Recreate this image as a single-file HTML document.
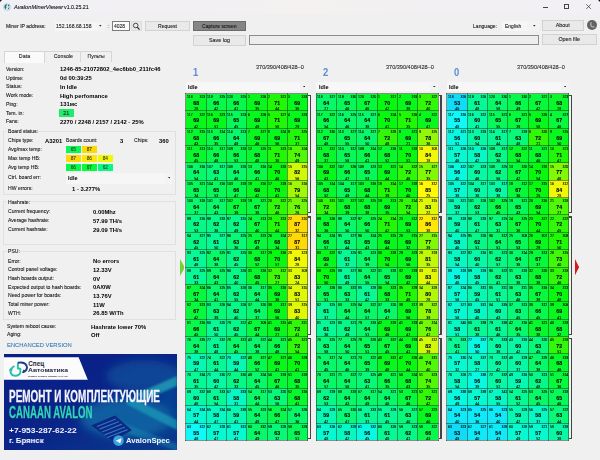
<!DOCTYPE html>
<html><head><meta charset="utf-8"><style>*{box-sizing:border-box;margin:0;padding:0}
html,body{width:600px;height:460px;overflow:hidden;background:#f0f0f0;font-family:"Liberation Sans",sans-serif;color:#000;position:relative}
.a{position:absolute}
.t{position:absolute;white-space:nowrap;line-height:1}
.c{position:absolute;width:20.33px;height:17.35px;overflow:hidden;color:#000}
.c i,.c s,.c u,.c b{position:absolute;font-style:normal;text-decoration:none;line-height:1;white-space:nowrap}
.c i{left:1.0px;top:1.75px;font-size:4.4px;-webkit-text-stroke:0.1px #000;transform:scaleX(0.8);transform-origin:0 0}
.c s{right:0.9px;top:1.75px;font-size:4.4px;-webkit-text-stroke:0.1px #000;transform:scaleX(0.8);transform-origin:100% 0}
.c b{left:0;width:100%;text-align:center;top:6.5px;font-size:6.0px;font-weight:bold;-webkit-text-stroke:0.12px #000;transform:scaleX(0.86)}
.c u{left:0;width:100%;text-align:center;top:13.85px;font-size:4.4px;-webkit-text-stroke:0.1px #000;transform:scaleX(0.82)}
.br{position:absolute;width:1.5px;background:#444}
.br:before,.br:after{content:"";position:absolute;right:0;width:3px;height:1.1px;background:#444}
.br:before{top:0}.br:after{bottom:0}</style></head><body>
<div class="a" style="left:0.00px;top:0.00px;width:600.00px;height:14.20px;background:linear-gradient(90deg,#f1f0f4 0%,#f2f0f3 35%,#f4f1f0 50%,#f3f0f2 65%,#f2f0f5 100%)"></div>
<svg class="a" style="left:2.5px;top:3px" width="8" height="8" viewBox="0 0 8 8"><circle cx="4" cy="4" r="3.5" fill="#d8eef0"/><path d="M1.3 3.2 Q2 1.2 3.6 1 L4 2.2 L3 3.4 L3.6 4.6 L2.6 6.2 Q1.2 5.4 1.3 3.2Z M5 1.2 Q6.4 1.6 6.8 3 L5.6 3.4 L4.8 2.4Z M5.2 4.8 L6.6 4.6 Q6.2 6.2 4.8 6.8Z" fill="#3d6e7e"/><circle cx="4" cy="4" r="3.5" fill="none" stroke="#8ec4cc" stroke-width="0.5"/></svg>
<div class="t" style="left:13.80px;top:5.17px;font-size:5.7px;color:#111;transform:scaleX(1.01);transform-origin:0 0;font-style:italic;-webkit-text-stroke:0.1px #111">AvalonMinerViewer</div>
<div class="t" style="left:64.20px;top:5.17px;font-size:5.7px;color:#111;transform:scaleX(0.93);transform-origin:0 0;-webkit-text-stroke:0.1px #111">v1.0.25.21</div>
<div class="a" style="left:-2px;top:-2px;width:4px;height:4px;border-radius:50%;background:radial-gradient(circle,#111 0,#111 40%,rgba(0,0,0,0) 75%)"></div>
<div class="a" style="left:598px;top:-2px;width:4px;height:4px;border-radius:50%;background:radial-gradient(circle,#111 0,#111 40%,rgba(0,0,0,0) 75%)"></div>
<div class="a" style="left:542.60px;top:6.60px;width:5.10px;height:0.80px;background:#444"></div>
<div class="a" style="left:564.20px;top:4.40px;width:4.80px;height:4.80px;border:0.8px solid #444"></div>
<svg class="a" style="left:586.2px;top:4.3px" width="5.2" height="5.2" viewBox="0 0 5.2 5.2"><path d="M0.3 0.3 L4.9 4.9 M4.9 0.3 L0.3 4.9" stroke="#444" stroke-width="0.8"/></svg>
<div class="t" style="left:6.00px;top:23.84px;font-size:5.5px;color:#1a1a1a;transform:scaleX(0.925);transform-origin:0 0;-webkit-text-stroke:0.12px #222">Miner IP address:</div>
<div class="a" style="left:54.50px;top:21.50px;width:50.00px;height:9.50px;background:#f6f6f6"></div>
<div class="a" style="left:96.50px;top:21.50px;width:8.00px;height:9.50px;background:#f3f3f3"></div>
<div class="t" style="left:56.00px;top:23.84px;font-size:5.5px;color:#1a1a1a;transform:scaleX(0.93);transform-origin:0 0;-webkit-text-stroke:0.1px #1a1a1a">152.168.68.158</div>
<svg class="a" style="left:99.20px;top:25.40px" width="2.6" height="1.6" viewBox="0 0 2.6 1.6"><path d="M0 0 L2.6 0 L1.3 1.5Z" fill="#222"/></svg>
<div class="t" style="left:107.60px;top:23.84px;font-size:5.5px;color:#333;-webkit-text-stroke:0.1px #333">:</div>
<div class="a" style="left:112.00px;top:21.30px;width:17.80px;height:9.60px;background:#fdfdfd;border:0.9px solid #7c7c7c"></div>
<div class="t" style="left:114.00px;top:23.84px;font-size:5.5px;color:#1a1a1a;transform:scaleX(0.9);transform-origin:0 0;-webkit-text-stroke:0.1px #1a1a1a">4028</div>
<div class="a" style="left:131.30px;top:21.00px;width:11.00px;height:10.30px;background:#e9e9e9;border:0.8px solid #dcdcdc"></div>
<svg class="a" style="left:132.3px;top:21.8px" width="9" height="9" viewBox="0 0 9 9"><circle cx="3.7" cy="3.5" r="2.3" stroke="#3a3a3a" stroke-width="0.9" fill="none"/><path d="M5.3 5.2 L7.6 7.6" stroke="#3a3a3a" stroke-width="1.3"/></svg>
<div class="a" style="left:144.50px;top:20.80px;width:45.00px;height:10.40px;background:#e9e9e9;border:0.8px solid #d2d2d2"></div>
<div class="t" style="left:144.50px;top:23.84px;font-size:5.5px;color:#1a1a1a;width:45.00px;text-align:center;transform:scaleX(0.93);transform-origin:50% 0;-webkit-text-stroke:0.1px #1a1a1a">Request</div>
<div class="a" style="left:193.00px;top:21.20px;width:52.70px;height:9.80px;background:#858585;border:0.9px solid #6c6c6c"></div>
<div class="t" style="left:193.00px;top:23.84px;font-size:5.5px;color:#161616;width:52.70px;text-align:center;transform:scaleX(0.92);transform-origin:50% 0;-webkit-text-stroke:0.1px #161616">Capture screen</div>
<div class="t" style="left:473.00px;top:23.84px;font-size:5.5px;color:#1a1a1a;transform:scaleX(0.925);transform-origin:0 0;-webkit-text-stroke:0.12px #222">Language:</div>
<div class="a" style="left:502.30px;top:21.00px;width:36.70px;height:10.00px;background:#f6f6f6"></div>
<div class="a" style="left:527.00px;top:21.00px;width:12.00px;height:10.00px;background:#f3f3f3"></div>
<div class="t" style="left:504.70px;top:23.84px;font-size:5.5px;color:#1a1a1a;transform:scaleX(0.9);transform-origin:0 0;-webkit-text-stroke:0.1px #1a1a1a">English</div>
<svg class="a" style="left:533.30px;top:25.40px" width="2.6" height="1.6" viewBox="0 0 2.6 1.6"><path d="M0 0 L2.6 0 L1.3 1.5Z" fill="#222"/></svg>
<div class="a" style="left:542.30px;top:19.70px;width:41.60px;height:11.60px;background:#e9e9e9;border:0.8px solid #d2d2d2"></div>
<div class="t" style="left:542.30px;top:23.37px;font-size:5.7px;color:#1a1a1a;width:41.60px;text-align:center;transform:scaleX(0.95);transform-origin:50% 0;-webkit-text-stroke:0.1px #1a1a1a">About</div>
<div class="a" style="left:587px;top:20px;width:10px;height:10px;border-radius:50%;background:#626262"></div>
<svg class="a" style="left:587px;top:20px" width="10" height="10" viewBox="0 0 10 10"><path d="M3.9 2.6 Q3.6 4.6 4.2 6 Q5 7.2 7 6.9" stroke="#b4b4b4" stroke-width="1.3" fill="none" stroke-linecap="round"/></svg>
<div class="a" style="left:193.00px;top:34.50px;width:52.80px;height:11.00px;background:#e9e9e9;border:0.8px solid #d2d2d2"></div>
<div class="t" style="left:193.00px;top:37.67px;font-size:5.7px;color:#1a1a1a;width:52.80px;text-align:center;transform:scaleX(0.95);transform-origin:50% 0;-webkit-text-stroke:0.1px #1a1a1a">Save log</div>
<div class="a" style="left:249.00px;top:34.80px;width:290.10px;height:9.80px;background:#ededed;border:0.9px solid #8c8c8c"></div>
<div class="a" style="left:542.30px;top:34.00px;width:54.40px;height:11.30px;background:#e9e9e9;border:0.8px solid #d2d2d2"></div>
<div class="t" style="left:542.30px;top:37.37px;font-size:5.7px;color:#1a1a1a;width:54.40px;text-align:center;transform:scaleX(0.95);transform-origin:50% 0;-webkit-text-stroke:0.1px #1a1a1a">Open file</div>
<div class="a" style="left:3.50px;top:50.50px;width:41.00px;height:12.00px;background:#fafafa;border:0.8px solid #d6d6d6;border-bottom:none"></div>
<div class="t" style="left:3.50px;top:54.16px;font-size:5.6px;color:#1a1a1a;width:41.00px;text-align:center;transform:scaleX(0.95);transform-origin:50% 0;-webkit-text-stroke:0.1px #1a1a1a">Data</div>
<div class="a" style="left:44.50px;top:50.80px;width:36.80px;height:11.70px;background:#f0f0f0;border:0.8px solid #d6d6d6;border-left:none;border-bottom:none"></div>
<div class="t" style="left:44.50px;top:54.16px;font-size:5.6px;color:#1a1a1a;width:36.80px;text-align:center;transform:scaleX(0.93);transform-origin:50% 0;-webkit-text-stroke:0.1px #1a1a1a">Console</div>
<div class="a" style="left:81.30px;top:50.80px;width:30.40px;height:11.70px;background:#f0f0f0;border:0.8px solid #d6d6d6;border-left:none;border-bottom:none"></div>
<div class="t" style="left:81.30px;top:54.16px;font-size:5.6px;color:#1a1a1a;width:30.40px;text-align:center;transform:scaleX(0.9);transform-origin:50% 0;-webkit-text-stroke:0.1px #1a1a1a">Пульты</div>
<div class="t" style="left:6.00px;top:66.84px;font-size:5.5px;color:#1a1a1a;transform:scaleX(0.925);transform-origin:0 0;-webkit-text-stroke:0.12px #222">Version:</div>
<div class="t" style="left:59.80px;top:66.34px;font-size:6.1px;font-weight:bold;transform:scaleX(0.96);transform-origin:0 0">1246-85-21072802_4ec6bb0_211fc46</div>
<div class="t" style="left:6.00px;top:75.84px;font-size:5.5px;color:#1a1a1a;transform:scaleX(0.925);transform-origin:0 0;-webkit-text-stroke:0.12px #222">Uptime:</div>
<div class="t" style="left:59.80px;top:75.34px;font-size:6.1px;font-weight:bold;transform:scaleX(0.96);transform-origin:0 0">0d 00:39:25</div>
<div class="t" style="left:6.00px;top:84.34px;font-size:5.5px;color:#1a1a1a;transform:scaleX(0.925);transform-origin:0 0;-webkit-text-stroke:0.12px #222">Status:</div>
<div class="t" style="left:59.80px;top:83.84px;font-size:6.1px;font-weight:bold;transform:scaleX(0.96);transform-origin:0 0">In Idle</div>
<div class="t" style="left:6.00px;top:93.14px;font-size:5.5px;color:#1a1a1a;transform:scaleX(0.925);transform-origin:0 0;-webkit-text-stroke:0.12px #222">Work mode:</div>
<div class="t" style="left:59.80px;top:92.64px;font-size:6.1px;font-weight:bold;transform:scaleX(0.96);transform-origin:0 0">High perfomance</div>
<div class="t" style="left:6.00px;top:101.84px;font-size:5.5px;color:#1a1a1a;transform:scaleX(0.925);transform-origin:0 0;-webkit-text-stroke:0.12px #222">Ping:</div>
<div class="t" style="left:59.80px;top:101.34px;font-size:6.1px;font-weight:bold;transform:scaleX(0.96);transform-origin:0 0">131мс</div>
<div class="t" style="left:6.00px;top:110.54px;font-size:5.5px;color:#1a1a1a;transform:scaleX(0.925);transform-origin:0 0;-webkit-text-stroke:0.12px #222">Tem. in:</div>
<div class="t" style="left:6.00px;top:119.24px;font-size:5.5px;color:#1a1a1a;transform:scaleX(0.925);transform-origin:0 0;-webkit-text-stroke:0.12px #222">Fans:</div>
<div class="t" style="left:59.80px;top:118.74px;font-size:6.1px;font-weight:bold;transform:scaleX(0.96);transform-origin:0 0">2270 / 2248 / 2157 / 2142 - 25%</div>
<div class="a" style="left:58.60px;top:109.20px;width:15.50px;height:7.40px;background:#22ea6c"></div>
<div class="t" style="left:58.60px;top:110.93px;font-size:5.4px;color:#202a20;width:15.50px;text-align:center;-webkit-text-stroke:0.1px #202a20">21</div>
<div class="a" style="left:3.40px;top:131.20px;width:172.20px;height:64.00px;border:0.8px solid #e0e0e0"></div>
<div class="a" style="left:6.40px;top:129.20px;width:30.50px;height:4.00px;background:#f0f0f0"></div>
<div class="t" style="left:7.60px;top:129.34px;font-size:5.5px;color:#1a1a1a;transform:scaleX(0.925);transform-origin:0 0;-webkit-text-stroke:0.12px #222">Board status:</div>
<div class="t" style="left:7.80px;top:138.34px;font-size:5.5px;color:#1a1a1a;transform:scaleX(0.925);transform-origin:0 0;-webkit-text-stroke:0.12px #222">Chips type:</div>
<div class="t" style="left:44.50px;top:137.64px;font-size:6.1px;font-weight:bold;transform:scaleX(0.96);transform-origin:0 0">A3201</div>
<div class="t" style="left:66.00px;top:138.34px;font-size:5.5px;color:#1a1a1a;transform:scaleX(0.925);transform-origin:0 0;-webkit-text-stroke:0.12px #222">Boards count:</div>
<div class="t" style="left:120.20px;top:137.64px;font-size:6.1px;font-weight:bold;transform:scaleX(0.96);transform-origin:0 0">3</div>
<div class="t" style="left:134.00px;top:138.34px;font-size:5.5px;color:#1a1a1a;transform:scaleX(0.925);transform-origin:0 0;-webkit-text-stroke:0.12px #222">Chips:</div>
<div class="t" style="left:158.70px;top:137.64px;font-size:6.1px;font-weight:bold;transform:scaleX(0.96);transform-origin:0 0">360</div>
<div class="t" style="left:7.80px;top:147.14px;font-size:5.5px;color:#1a1a1a;transform:scaleX(0.925);transform-origin:0 0;-webkit-text-stroke:0.12px #222">Avg/max temp:</div>
<div class="t" style="left:7.80px;top:155.94px;font-size:5.5px;color:#1a1a1a;transform:scaleX(0.925);transform-origin:0 0;-webkit-text-stroke:0.12px #222">Max temp HB:</div>
<div class="t" style="left:7.80px;top:165.04px;font-size:5.5px;color:#1a1a1a;transform:scaleX(0.925);transform-origin:0 0;-webkit-text-stroke:0.12px #222">Avg temp HB:</div>
<div class="t" style="left:7.80px;top:175.44px;font-size:5.5px;color:#1a1a1a;transform:scaleX(0.925);transform-origin:0 0;-webkit-text-stroke:0.12px #222">Ctrl. board err:</div>
<div class="t" style="left:7.80px;top:186.04px;font-size:5.5px;color:#1a1a1a;transform:scaleX(0.925);transform-origin:0 0;-webkit-text-stroke:0.12px #222">HW errors:</div>
<div class="a" style="left:66.00px;top:145.80px;width:14.70px;height:7.40px;background:#08f85a"></div>
<div class="t" style="left:66.00px;top:147.10px;font-size:5.2px;color:#3b3a1c;width:14.70px;text-align:center;transform:scaleX(0.92);transform-origin:50% 0;-webkit-text-stroke:0.1px #3b3a1c">65</div>
<div class="a" style="left:82.00px;top:145.80px;width:14.70px;height:7.40px;background:#ffd808"></div>
<div class="t" style="left:82.00px;top:147.10px;font-size:5.2px;color:#3b3a1c;width:14.70px;text-align:center;transform:scaleX(0.92);transform-origin:50% 0;-webkit-text-stroke:0.1px #3b3a1c">87</div>
<div class="a" style="left:66.00px;top:154.50px;width:14.70px;height:7.30px;background:#ffd808"></div>
<div class="t" style="left:66.00px;top:155.70px;font-size:5.2px;color:#3b3a1c;width:14.70px;text-align:center;transform:scaleX(0.92);transform-origin:50% 0;-webkit-text-stroke:0.1px #3b3a1c">87</div>
<div class="a" style="left:82.00px;top:154.50px;width:14.70px;height:7.30px;background:#ffe808"></div>
<div class="t" style="left:82.00px;top:155.70px;font-size:5.2px;color:#3b3a1c;width:14.70px;text-align:center;transform:scaleX(0.92);transform-origin:50% 0;-webkit-text-stroke:0.1px #3b3a1c">86</div>
<div class="a" style="left:98.00px;top:154.50px;width:14.70px;height:7.30px;background:#f0f808"></div>
<div class="t" style="left:98.00px;top:155.70px;font-size:5.2px;color:#3b3a1c;width:14.70px;text-align:center;transform:scaleX(0.92);transform-origin:50% 0;-webkit-text-stroke:0.1px #3b3a1c">84</div>
<div class="a" style="left:66.00px;top:163.80px;width:14.70px;height:7.40px;background:#08f84b"></div>
<div class="t" style="left:66.00px;top:165.10px;font-size:5.2px;color:#3b3a1c;width:14.70px;text-align:center;transform:scaleX(0.92);transform-origin:50% 0;-webkit-text-stroke:0.1px #3b3a1c">66</div>
<div class="a" style="left:82.00px;top:163.80px;width:14.70px;height:7.40px;background:#08f83c"></div>
<div class="t" style="left:82.00px;top:165.10px;font-size:5.2px;color:#3b3a1c;width:14.70px;text-align:center;transform:scaleX(0.92);transform-origin:50% 0;-webkit-text-stroke:0.1px #3b3a1c">67</div>
<div class="a" style="left:98.00px;top:163.80px;width:14.70px;height:7.40px;background:#08f887"></div>
<div class="t" style="left:98.00px;top:165.10px;font-size:5.2px;color:#3b3a1c;width:14.70px;text-align:center;transform:scaleX(0.92);transform-origin:50% 0;-webkit-text-stroke:0.1px #3b3a1c">62</div>
<div class="a" style="left:66.00px;top:173.30px;width:106.70px;height:10.30px;background:#f6f6f6"></div>
<div class="a" style="left:164.70px;top:173.30px;width:8.00px;height:10.30px;background:#f3f3f3"></div>
<div class="t" style="left:68.00px;top:176.19px;font-size:5.8px;font-weight:bold;transform:scaleX(0.95);transform-origin:0 0">Idle</div>
<svg class="a" style="left:167.70px;top:177.20px" width="2.6" height="1.6" viewBox="0 0 2.6 1.6"><path d="M0 0 L2.6 0 L1.3 1.5Z" fill="#222"/></svg>
<div class="t" style="left:72.30px;top:186.04px;font-size:6.1px;font-weight:bold;transform:scaleX(0.96);transform-origin:0 0">1 - 3.277%</div>
<div class="a" style="left:3.40px;top:201.20px;width:172.20px;height:43.80px;border:0.8px solid #e0e0e0"></div>
<div class="a" style="left:6.40px;top:199.20px;width:19.50px;height:4.00px;background:#f0f0f0"></div>
<div class="t" style="left:7.60px;top:199.84px;font-size:5.5px;color:#1a1a1a;transform:scaleX(0.925);transform-origin:0 0;-webkit-text-stroke:0.12px #222">Hashrate:</div>
<div class="t" style="left:7.60px;top:209.44px;font-size:5.5px;color:#1a1a1a;transform:scaleX(0.925);transform-origin:0 0;-webkit-text-stroke:0.12px #222">Current frequency:</div>
<div class="t" style="left:92.70px;top:209.34px;font-size:6.1px;font-weight:bold;transform:scaleX(0.96);transform-origin:0 0">0.00Mhz</div>
<div class="t" style="left:7.60px;top:218.04px;font-size:5.5px;color:#1a1a1a;transform:scaleX(0.925);transform-origin:0 0;-webkit-text-stroke:0.12px #222">Average hashrate:</div>
<div class="t" style="left:92.70px;top:218.04px;font-size:6.1px;font-weight:bold;transform:scaleX(0.96);transform-origin:0 0">57.99 TH/s</div>
<div class="t" style="left:7.60px;top:226.64px;font-size:5.5px;color:#1a1a1a;transform:scaleX(0.925);transform-origin:0 0;-webkit-text-stroke:0.12px #222">Current hashrate:</div>
<div class="t" style="left:92.70px;top:226.64px;font-size:6.1px;font-weight:bold;transform:scaleX(0.96);transform-origin:0 0">29.09 TH/s</div>
<div class="a" style="left:3.40px;top:251.20px;width:172.20px;height:69.10px;border:0.8px solid #e0e0e0"></div>
<div class="a" style="left:6.60px;top:249.20px;width:12.00px;height:4.00px;background:#f0f0f0"></div>
<div class="t" style="left:7.80px;top:249.24px;font-size:5.5px;color:#1a1a1a;transform:scaleX(0.925);transform-origin:0 0;-webkit-text-stroke:0.12px #222">PSU:</div>
<div class="t" style="left:7.60px;top:258.74px;font-size:5.5px;color:#1a1a1a;transform:scaleX(0.925);transform-origin:0 0;-webkit-text-stroke:0.12px #222">Error:</div>
<div class="t" style="left:92.70px;top:258.34px;font-size:6.1px;font-weight:bold;transform:scaleX(0.96);transform-origin:0 0">No errors</div>
<div class="t" style="left:7.60px;top:267.34px;font-size:5.5px;color:#1a1a1a;transform:scaleX(0.925);transform-origin:0 0;-webkit-text-stroke:0.12px #222">Control panel voltage:</div>
<div class="t" style="left:92.70px;top:266.94px;font-size:6.1px;font-weight:bold;transform:scaleX(0.96);transform-origin:0 0">12.33V</div>
<div class="t" style="left:7.60px;top:275.94px;font-size:5.5px;color:#1a1a1a;transform:scaleX(0.925);transform-origin:0 0;-webkit-text-stroke:0.12px #222">Hash boards output:</div>
<div class="t" style="left:92.70px;top:275.54px;font-size:6.1px;font-weight:bold;transform:scaleX(0.96);transform-origin:0 0">0V</div>
<div class="t" style="left:7.60px;top:284.64px;font-size:5.5px;color:#1a1a1a;transform:scaleX(0.925);transform-origin:0 0;-webkit-text-stroke:0.12px #222">Expected output to hash boards:</div>
<div class="t" style="left:92.70px;top:284.24px;font-size:6.1px;font-weight:bold;transform:scaleX(0.96);transform-origin:0 0">0A/0W</div>
<div class="t" style="left:7.60px;top:293.24px;font-size:5.5px;color:#1a1a1a;transform:scaleX(0.925);transform-origin:0 0;-webkit-text-stroke:0.12px #222">Need power for boards:</div>
<div class="t" style="left:92.70px;top:292.84px;font-size:6.1px;font-weight:bold;transform:scaleX(0.96);transform-origin:0 0">13.76V</div>
<div class="t" style="left:7.60px;top:301.94px;font-size:5.5px;color:#1a1a1a;transform:scaleX(0.925);transform-origin:0 0;-webkit-text-stroke:0.12px #222">Total miner power:</div>
<div class="t" style="left:92.70px;top:301.54px;font-size:6.1px;font-weight:bold;transform:scaleX(0.96);transform-origin:0 0">11W</div>
<div class="t" style="left:7.60px;top:310.74px;font-size:5.5px;color:#1a1a1a;transform:scaleX(0.925);transform-origin:0 0;-webkit-text-stroke:0.12px #222">WTH:</div>
<div class="t" style="left:92.70px;top:310.34px;font-size:6.1px;font-weight:bold;transform:scaleX(0.96);transform-origin:0 0">26.85 W/Th</div>
<div class="t" style="left:6.80px;top:324.04px;font-size:5.5px;color:#1a1a1a;transform:scaleX(0.925);transform-origin:0 0;-webkit-text-stroke:0.12px #222">System reboot cause:</div>
<div class="t" style="left:91.00px;top:323.64px;font-size:6.1px;font-weight:bold;transform:scaleX(0.96);transform-origin:0 0">Hashrate lower 70%</div>
<div class="t" style="left:6.80px;top:332.34px;font-size:5.5px;color:#1a1a1a;transform:scaleX(0.925);transform-origin:0 0;-webkit-text-stroke:0.12px #222">Aging:</div>
<div class="t" style="left:91.00px;top:332.04px;font-size:6.1px;font-weight:bold;transform:scaleX(0.96);transform-origin:0 0">Off</div>
<div class="t" style="left:6.70px;top:342.51px;font-size:5.9px;color:#3b7db3;transform:scaleX(0.99);transform-origin:0 0;-webkit-text-stroke:0.1px #3b7db3">ENCHANCED VERSION</div>
<svg class="a" style="left:3.75px;top:353.6px" width="173" height="96.4" viewBox="0 0 173 96.4">
<defs>
<filter id="bl" x="-50%" y="-50%" width="200%" height="200%"><feGaussianBlur stdDeviation="4"/></filter>
<filter id="bl2" x="-50%" y="-50%" width="200%" height="200%"><feGaussianBlur stdDeviation="1.2"/></filter>
<linearGradient id="lg" x1="0" y1="0" x2="1" y2="1"><stop offset="0" stop-color="#0a1e86"/><stop offset="0.5" stop-color="#0a2488"/><stop offset="1" stop-color="#0a3c8c"/></linearGradient>
</defs>
<rect x="0" y="0" width="173" height="96.4" fill="url(#lg)"/>
<g filter="url(#bl)">
<ellipse cx="140" cy="22" rx="38" ry="16" fill="#0a4a98" opacity="0.85"/>
<ellipse cx="122" cy="64" rx="46" ry="20" fill="#0a6aa6" opacity="0.8"/>
<ellipse cx="165" cy="52" rx="10" ry="26" fill="#0e5aa0" opacity="0.4"/>
</g>
<g filter="url(#bl2)">
<path d="M132 40 L173 22 L173 32 L140 46Z" fill="#1fa6b8" opacity="0.75"/>
<path d="M128 44 L173 66 L173 76 L122 50Z" fill="#1a9cb8" opacity="0.7"/>
<path d="M112 66 L173 90 L173 97 L104 72Z" fill="#1590b4" opacity="0.4"/>
</g>
<polygon points="87.1,71.4 111.1,61.6 128,76.2 108.7,86.7" fill="#0a2482" opacity="0.92"/>
<g stroke="#3d86c8" stroke-width="1.3" opacity="0.8">
<path d="M93 72.5 L112 65 M95.5 75.2 L115 67.5 M98 78 L118 70.2 M100.5 80.8 L121 73 M103 83.5 L123.5 75.6"/>
</g>
<polygon points="0,3.2 74.6,3.2 83.8,25.8 0,25.8" fill="#fbfbfb"/>
<path d="M10.3 11.9 L6.2 15.6 Q6.4 21.6 11 21.8 Q15.9 21.9 16.3 18.2 L16.3 14.6 L13.9 14.6 L13.9 8.6" stroke="#2cbfa6" stroke-width="1.9" fill="none" stroke-linejoin="round"/>
<path d="M5 16.2 L8.6 13.4 L8.2 17.6Z" fill="#2cbfa6"/>
<path d="M13.9 8.6 L17.3 8.5 Q22.6 8.9 23 13.4 Q22.9 16.8 18.8 18.4" stroke="#1d3c88" stroke-width="1.9" fill="none"/>
<path d="M17.6 19.6 L21.4 16.4 L19.6 15.4Z" fill="#1d3c88"/>
<circle cx="114.5" cy="86.6" r="5.3" fill="#3aa3e3"/>
<path d="M111.6 86.7 L117.6 84.3 L116.2 89.4 L114.3 87.9 Z" fill="#fff"/>
</svg>
<div class="t" style="left:28.20px;top:361.08px;font-size:6.4px;font-weight:bold;color:#1b1f3d">Спец</div>
<div class="t" style="left:28.20px;top:367.79px;font-size:5.8px;font-weight:bold;color:#1b1f3d;transform:scaleX(1.18);transform-origin:0 0">Автоматика</div>
<div class="t" style="left:28.20px;top:375.44px;font-size:2.2px;font-weight:bold;color:#2a2a3a;transform:scaleX(1.15);transform-origin:0 0">Ремонт Сервис Canaan AVALON</div>
<div class="t" style="left:9.00px;top:388.19px;font-size:16.2px;font-weight:bold;color:#f4f4ff;transform:scaleX(0.615);transform-origin:0 0;-webkit-text-stroke:0.3px #f4f4ff">РЕМОНТ И КОМПЛЕКТУЮЩИЕ</div>
<div class="t" style="left:9.00px;top:405.09px;font-size:15.6px;font-weight:bold;color:#31d6b2;transform:scaleX(0.62);transform-origin:0 0;-webkit-text-stroke:0.3px #31d6b2">CANAAN AVALON</div>
<div class="t" style="left:9.00px;top:427.30px;font-size:7.8px;font-weight:bold;color:#f4f4ff;transform:scaleX(1.08);transform-origin:0 0">+7-953-287-62-22</div>
<div class="t" style="left:9.00px;top:436.70px;font-size:7.8px;font-weight:bold;color:#f4f4ff">г. Брянск</div>
<div class="t" style="left:126.30px;top:437.40px;font-size:7.8px;font-weight:bold;color:#f4f4ff;transform:scaleX(0.99);transform-origin:0 0">AvalonSpec</div>
<div class="t" style="left:192.50px;top:68.27px;font-size:10.2px;color:#5d8bd6;transform:scaleX(0.92);transform-origin:0 0;font-weight:600">1</div>
<div class="t" style="left:255.70px;top:64.56px;font-size:5.6px;color:#2a2a2a;transform:scaleX(0.99);transform-origin:0 0;-webkit-text-stroke:0.1px #2a2a2a">370/390/408/428–0</div>
<div class="a" style="left:185.80px;top:81.50px;width:122.00px;height:9.50px;background:#f7f7f7"></div>
<div class="a" style="left:299.80px;top:81.50px;width:8.00px;height:9.50px;background:#f3f3f3"></div>
<div class="t" style="left:188.00px;top:84.59px;font-size:5.8px;font-weight:bold;transform:scaleX(0.95);transform-origin:0 0">Idle</div>
<svg class="a" style="left:302.50px;top:85.70px" width="2.6" height="1.6" viewBox="0 0 2.6 1.6"><path d="M0 0 L2.6 0 L1.3 1.5Z" fill="#222"/></svg>
<div class="t" style="left:323.00px;top:68.27px;font-size:10.2px;color:#5d8bd6;transform:scaleX(0.92);transform-origin:0 0;font-weight:600">2</div>
<div class="t" style="left:386.20px;top:64.56px;font-size:5.6px;color:#2a2a2a;transform:scaleX(0.99);transform-origin:0 0;-webkit-text-stroke:0.1px #2a2a2a">370/390/408/428–0</div>
<div class="a" style="left:316.30px;top:81.50px;width:122.00px;height:9.50px;background:#f7f7f7"></div>
<div class="a" style="left:430.30px;top:81.50px;width:8.00px;height:9.50px;background:#f3f3f3"></div>
<div class="t" style="left:318.50px;top:84.59px;font-size:5.8px;font-weight:bold;transform:scaleX(0.95);transform-origin:0 0">Idle</div>
<svg class="a" style="left:433.00px;top:85.70px" width="2.6" height="1.6" viewBox="0 0 2.6 1.6"><path d="M0 0 L2.6 0 L1.3 1.5Z" fill="#222"/></svg>
<div class="t" style="left:453.60px;top:68.27px;font-size:10.2px;color:#5d8bd6;transform:scaleX(0.92);transform-origin:0 0;font-weight:600">0</div>
<div class="t" style="left:516.80px;top:64.56px;font-size:5.6px;color:#2a2a2a;transform:scaleX(0.99);transform-origin:0 0;-webkit-text-stroke:0.1px #2a2a2a">370/390/408/428–0</div>
<div class="a" style="left:446.90px;top:81.50px;width:122.00px;height:9.50px;background:#f7f7f7"></div>
<div class="a" style="left:560.90px;top:81.50px;width:8.00px;height:9.50px;background:#f3f3f3"></div>
<div class="t" style="left:449.10px;top:84.59px;font-size:5.8px;font-weight:bold;transform:scaleX(0.95);transform-origin:0 0">Idle</div>
<svg class="a" style="left:563.60px;top:85.70px" width="2.6" height="1.6" viewBox="0 0 2.6 1.6"><path d="M0 0 L2.6 0 L1.3 1.5Z" fill="#222"/></svg>
<div class="c" style="left:185.80px;top:93.50px;background:#08f82d"><i>118</i><s>323</s><b>68</b><u>28</u></div>
<div class="c" style="left:206.13px;top:93.50px;background:#08f84b"><i>119</i><s>325</s><b>66</b><u>42</u></div>
<div class="c" style="left:226.46px;top:93.50px;background:#08f84b"><i>120</i><s>325</s><b>66</b><u>41</u></div>
<div class="c" style="left:246.79px;top:93.50px;background:#08f81e"><i>1</i><s>326</s><b>69</b><u>35</u></div>
<div class="c" style="left:267.12px;top:93.50px;background:#20f808"><i>2</i><s>321</s><b>71</b><u>44</u></div>
<div class="c" style="left:287.45px;top:93.50px;background:#08f81e"><i>3</i><s>333</s><b>69</b><u>36</u></div>
<div class="c" style="left:185.80px;top:110.85px;background:#08f81e"><i>117</i><s>322</s><b>69</b><u>42</u></div>
<div class="c" style="left:206.13px;top:110.85px;background:#08f81e"><i>116</i><s>323</s><b>69</b><u>51</u></div>
<div class="c" style="left:226.46px;top:110.85px;background:#08f85a"><i>115</i><s>323</s><b>65</b><u>45</u></div>
<div class="c" style="left:246.79px;top:110.85px;background:#08f81e"><i>6</i><s>326</s><b>69</b><u>49</u></div>
<div class="c" style="left:267.12px;top:110.85px;background:#20f808"><i>5</i><s>327</s><b>71</b><u>58</u></div>
<div class="c" style="left:287.45px;top:110.85px;background:#08f81e"><i>4</i><s>333</s><b>69</b><u>29</u></div>
<div class="c" style="left:185.80px;top:128.20px;background:#08f82d"><i>112</i><s>315</s><b>68</b><u>43</u></div>
<div class="c" style="left:206.13px;top:128.20px;background:#08f84b"><i>113</i><s>314</s><b>66</b><u>35</u></div>
<div class="c" style="left:226.46px;top:128.20px;background:#08f869"><i>114</i><s>313</s><b>64</b><u>49</u></div>
<div class="c" style="left:246.79px;top:128.20px;background:#08f81e"><i>7</i><s>327</s><b>69</b><u>46</u></div>
<div class="c" style="left:267.12px;top:128.20px;background:#08f81e"><i>8</i><s>324</s><b>69</b><u>56</u></div>
<div class="c" style="left:287.45px;top:128.20px;background:#20f808"><i>9</i><s>325</s><b>71</b><u>37</u></div>
<div class="c" style="left:185.80px;top:145.55px;background:#08f82d"><i>111</i><s>313</s><b>68</b><u>45</u></div>
<div class="c" style="left:206.13px;top:145.55px;background:#08f84b"><i>110</i><s>317</s><b>66</b><u>48</u></div>
<div class="c" style="left:226.46px;top:145.55px;background:#08f84b"><i>109</i><s>318</s><b>66</b><u>53</u></div>
<div class="c" style="left:246.79px;top:145.55px;background:#08f82d"><i>12</i><s>325</s><b>68</b><u>48</u></div>
<div class="c" style="left:267.12px;top:145.55px;background:#20f808"><i>11</i><s>323</s><b>71</b><u>38</u></div>
<div class="c" style="left:287.45px;top:145.55px;background:#50f808"><i>10</i><s>324</s><b>74</b><u>49</u></div>
<div class="c" style="left:185.80px;top:162.90px;background:#08f869"><i>106</i><s>316</s><b>64</b><u>54</u></div>
<div class="c" style="left:206.13px;top:162.90px;background:#08f878"><i>107</i><s>317</s><b>63</b><u>41</u></div>
<div class="c" style="left:226.46px;top:162.90px;background:#08f869"><i>108</i><s>318</s><b>64</b><u>46</u></div>
<div class="c" style="left:246.79px;top:162.90px;background:#08f84b"><i>13</i><s>316</s><b>66</b><u>41</u></div>
<div class="c" style="left:267.12px;top:162.90px;background:#08f810"><i>14</i><s>318</s><b>70</b><u>46</u></div>
<div class="c" style="left:287.45px;top:162.90px;background:#d0f808"><i>15</i><s>315</s><b>82</b><u>56</u></div>
<div class="c" style="left:185.80px;top:180.25px;background:#08f85a"><i>105</i><s>321</s><b>65</b><u>34</u></div>
<div class="c" style="left:206.13px;top:180.25px;background:#08f85a"><i>104</i><s>316</s><b>65</b><u>53</u></div>
<div class="c" style="left:226.46px;top:180.25px;background:#08f84b"><i>103</i><s>318</s><b>66</b><u>47</u></div>
<div class="c" style="left:246.79px;top:180.25px;background:#08f81e"><i>18</i><s>316</s><b>69</b><u>42</u></div>
<div class="c" style="left:267.12px;top:180.25px;background:#08f810"><i>17</i><s>318</s><b>70</b><u>41</u></div>
<div class="c" style="left:287.45px;top:180.25px;background:#a0f808"><i>16</i><s>316</s><b>79</b><u>54</u></div>
<div class="c" style="left:185.80px;top:197.60px;background:#08f869"><i>100</i><s>318</s><b>64</b><u>37</u></div>
<div class="c" style="left:206.13px;top:197.60px;background:#08f869"><i>101</i><s>317</s><b>64</b><u>43</u></div>
<div class="c" style="left:226.46px;top:197.60px;background:#08f83c"><i>102</i><s>318</s><b>67</b><u>39</u></div>
<div class="c" style="left:246.79px;top:197.60px;background:#08f83c"><i>19</i><s>321</s><b>67</b><u>38</u></div>
<div class="c" style="left:267.12px;top:197.60px;background:#30f808"><i>20</i><s>322</s><b>72</b><u>46</u></div>
<div class="c" style="left:287.45px;top:197.60px;background:#70f808"><i>21</i><s>325</s><b>76</b><u>26</u></div>
<div class="c" style="left:185.80px;top:214.95px;background:#08f887"><i>99</i><s>316</s><b>62</b><u>53</u></div>
<div class="c" style="left:206.13px;top:214.95px;background:#08f887"><i>98</i><s>318</s><b>62</b><u>36</u></div>
<div class="c" style="left:226.46px;top:214.95px;background:#08f887"><i>97</i><s>315</s><b>62</b><u>49</u></div>
<div class="c" style="left:246.79px;top:214.95px;background:#08f83c"><i>24</i><s>313</s><b>67</b><u>40</u></div>
<div class="c" style="left:267.12px;top:214.95px;background:#20f808"><i>23</i><s>313</s><b>71</b><u>44</u></div>
<div class="c" style="left:287.45px;top:214.95px;background:#ffd808"><i>22</i><s>310</s><b>87</b><u>32</u></div>
<div class="c" style="left:185.80px;top:232.30px;background:#08f887"><i>94</i><s>327</s><b>62</b><u>45</u></div>
<div class="c" style="left:206.13px;top:232.30px;background:#08f896"><i>95</i><s>327</s><b>61</b><u>50</u></div>
<div class="c" style="left:226.46px;top:232.30px;background:#08f878"><i>96</i><s>325</s><b>63</b><u>36</u></div>
<div class="c" style="left:246.79px;top:232.30px;background:#08f83c"><i>25</i><s>323</s><b>67</b><u>49</u></div>
<div class="c" style="left:267.12px;top:232.30px;background:#08f82d"><i>26</i><s>324</s><b>68</b><u>34</u></div>
<div class="c" style="left:287.45px;top:232.30px;background:#ffd808"><i>27</i><s>317</s><b>87</b><u>31</u></div>
<div class="c" style="left:185.80px;top:249.65px;background:#08f896"><i>93</i><s>325</s><b>61</b><u>48</u></div>
<div class="c" style="left:206.13px;top:249.65px;background:#08f869"><i>92</i><s>325</s><b>64</b><u>38</u></div>
<div class="c" style="left:226.46px;top:249.65px;background:#08f887"><i>91</i><s>325</s><b>62</b><u>45</u></div>
<div class="c" style="left:246.79px;top:249.65px;background:#08f82d"><i>30</i><s>317</s><b>68</b><u>52</u></div>
<div class="c" style="left:267.12px;top:249.65px;background:#08f810"><i>29</i><s>316</s><b>70</b><u>57</u></div>
<div class="c" style="left:287.45px;top:249.65px;background:#f0f808"><i>28</i><s>323</s><b>84</b><u>28</u></div>
<div class="c" style="left:185.80px;top:267.00px;background:#08f896"><i>88</i><s>325</s><b>61</b><u>33</u></div>
<div class="c" style="left:206.13px;top:267.00px;background:#08f869"><i>89</i><s>325</s><b>64</b><u>43</u></div>
<div class="c" style="left:226.46px;top:267.00px;background:#08f887"><i>90</i><s>326</s><b>62</b><u>40</u></div>
<div class="c" style="left:246.79px;top:267.00px;background:#08f82d"><i>31</i><s>316</s><b>68</b><u>45</u></div>
<div class="c" style="left:267.12px;top:267.00px;background:#40f808"><i>32</i><s>312</s><b>73</b><u>27</u></div>
<div class="c" style="left:287.45px;top:267.00px;background:#e0f808"><i>33</i><s>309</s><b>83</b><u>24</u></div>
<div class="c" style="left:185.80px;top:284.35px;background:#08f83c"><i>87</i><s>324</s><b>67</b><u>34</u></div>
<div class="c" style="left:206.13px;top:284.35px;background:#08f869"><i>86</i><s>325</s><b>64</b><u>41</u></div>
<div class="c" style="left:226.46px;top:284.35px;background:#08f887"><i>85</i><s>326</s><b>62</b><u>55</u></div>
<div class="c" style="left:246.79px;top:284.35px;background:#08f869"><i>36</i><s>317</s><b>64</b><u>44</u></div>
<div class="c" style="left:267.12px;top:284.35px;background:#08f81e"><i>35</i><s>316</s><b>69</b><u>38</u></div>
<div class="c" style="left:287.45px;top:284.35px;background:#e0f808"><i>34</i><s>310</s><b>83</b><u>51</u></div>
<div class="c" style="left:185.80px;top:301.70px;background:#08f83c"><i>82</i><s>323</s><b>67</b><u>42</u></div>
<div class="c" style="left:206.13px;top:301.70px;background:#08f878"><i>83</i><s>326</s><b>63</b><u>39</u></div>
<div class="c" style="left:226.46px;top:301.70px;background:#08f887"><i>84</i><s>326</s><b>62</b><u>40</u></div>
<div class="c" style="left:246.79px;top:301.70px;background:#08f869"><i>37</i><s>320</s><b>64</b><u>37</u></div>
<div class="c" style="left:267.12px;top:301.70px;background:#08f81e"><i>38</i><s>317</s><b>69</b><u>56</u></div>
<div class="c" style="left:287.45px;top:301.70px;background:#e0f808"><i>39</i><s>315</s><b>83</b><u>40</u></div>
<div class="c" style="left:185.80px;top:319.05px;background:#08f84b"><i>81</i><s>316</s><b>66</b><u>45</u></div>
<div class="c" style="left:206.13px;top:319.05px;background:#08f896"><i>80</i><s>320</s><b>61</b><u>50</u></div>
<div class="c" style="left:226.46px;top:319.05px;background:#08f887"><i>79</i><s>322</s><b>62</b><u>45</u></div>
<div class="c" style="left:246.79px;top:319.05px;background:#08f83c"><i>42</i><s>309</s><b>67</b><u>44</u></div>
<div class="c" style="left:267.12px;top:319.05px;background:#08f81e"><i>41</i><s>315</s><b>69</b><u>27</u></div>
<div class="c" style="left:287.45px;top:319.05px;background:#30f808"><i>40</i><s>311</s><b>72</b><u>41</u></div>
<div class="c" style="left:185.80px;top:336.40px;background:#08f869"><i>76</i><s>335</s><b>64</b><u>38</u></div>
<div class="c" style="left:206.13px;top:336.40px;background:#08f896"><i>77</i><s>332</s><b>61</b><u>48</u></div>
<div class="c" style="left:226.46px;top:336.40px;background:#08f869"><i>78</i><s>331</s><b>64</b><u>45</u></div>
<div class="c" style="left:246.79px;top:336.40px;background:#08f869"><i>43</i><s>322</s><b>64</b><u>38</u></div>
<div class="c" style="left:267.12px;top:336.40px;background:#08f84b"><i>44</i><s>321</s><b>66</b><u>48</u></div>
<div class="c" style="left:287.45px;top:336.40px;background:#30f808"><i>45</i><s>321</s><b>72</b><u>54</u></div>
<div class="c" style="left:185.80px;top:353.75px;background:#08f8b4"><i>75</i><s>322</s><b>59</b><u>47</u></div>
<div class="c" style="left:206.13px;top:353.75px;background:#08f896"><i>74</i><s>322</s><b>61</b><u>44</u></div>
<div class="c" style="left:226.46px;top:353.75px;background:#08f8b4"><i>73</i><s>322</s><b>59</b><u>44</u></div>
<div class="c" style="left:246.79px;top:353.75px;background:#08f84b"><i>48</i><s>327</s><b>66</b><u>52</u></div>
<div class="c" style="left:267.12px;top:353.75px;background:#08f81e"><i>47</i><s>327</s><b>69</b><u>41</u></div>
<div class="c" style="left:287.45px;top:353.75px;background:#08f810"><i>46</i><s>329</s><b>70</b><u>41</u></div>
<div class="c" style="left:185.80px;top:371.10px;background:#08f896"><i>70</i><s>334</s><b>61</b><u>35</u></div>
<div class="c" style="left:206.13px;top:371.10px;background:#08f8a5"><i>71</i><s>330</s><b>60</b><u>42</u></div>
<div class="c" style="left:226.46px;top:371.10px;background:#08f887"><i>72</i><s>330</s><b>62</b><u>33</u></div>
<div class="c" style="left:246.79px;top:371.10px;background:#08f869"><i>49</i><s>324</s><b>64</b><u>45</u></div>
<div class="c" style="left:267.12px;top:371.10px;background:#08f83c"><i>50</i><s>319</s><b>67</b><u>46</u></div>
<div class="c" style="left:287.45px;top:371.10px;background:#08f82d"><i>51</i><s>318</s><b>68</b><u>35</u></div>
<div class="c" style="left:185.80px;top:388.45px;background:#08f8a5"><i>69</i><s>332</s><b>60</b><u>48</u></div>
<div class="c" style="left:206.13px;top:388.45px;background:#08f896"><i>68</i><s>333</s><b>61</b><u>54</u></div>
<div class="c" style="left:226.46px;top:388.45px;background:#08f8c3"><i>67</i><s>333</s><b>58</b><u>31</u></div>
<div class="c" style="left:246.79px;top:388.45px;background:#08f869"><i>54</i><s>317</s><b>64</b><u>44</u></div>
<div class="c" style="left:267.12px;top:388.45px;background:#08f878"><i>53</i><s>320</s><b>63</b><u>56</u></div>
<div class="c" style="left:287.45px;top:388.45px;background:#08f82d"><i>52</i><s>316</s><b>68</b><u>41</u></div>
<div class="c" style="left:185.80px;top:405.80px;background:#08f8d2"><i>64</i><s>334</s><b>57</b><u>44</u></div>
<div class="c" style="left:206.13px;top:405.80px;background:#08f8c3"><i>65</i><s>334</s><b>58</b><u>47</u></div>
<div class="c" style="left:226.46px;top:405.80px;background:#08f8b4"><i>66</i><s>338</s><b>59</b><u>41</u></div>
<div class="c" style="left:246.79px;top:405.80px;background:#08f869"><i>55</i><s>323</s><b>64</b><u>48</u></div>
<div class="c" style="left:267.12px;top:405.80px;background:#08f84b"><i>56</i><s>324</s><b>66</b><u>47</u></div>
<div class="c" style="left:287.45px;top:405.80px;background:#08f869"><i>57</i><s>326</s><b>64</b><u>36</u></div>
<div class="c" style="left:185.80px;top:423.15px;background:#10f8f8"><i>63</i><s>322</s><b>55</b><u>48</u></div>
<div class="c" style="left:206.13px;top:423.15px;background:#08f8d2"><i>62</i><s>328</s><b>57</b><u>47</u></div>
<div class="c" style="left:226.46px;top:423.15px;background:#08f8d2"><i>61</i><s>331</s><b>57</b><u>41</u></div>
<div class="c" style="left:246.79px;top:423.15px;background:#08f869"><i>60</i><s>332</s><b>64</b><u>49</u></div>
<div class="c" style="left:267.12px;top:423.15px;background:#08f878"><i>59</i><s>328</s><b>63</b><u>32</u></div>
<div class="c" style="left:287.45px;top:423.15px;background:#08f85a"><i>58</i><s>329</s><b>65</b><u>51</u></div>
<div class="a" style="left:185px;top:93px;width:1px;height:348px;background:rgba(20,50,30,.5)"></div>
<div class="a" style="left:206px;top:93px;width:1px;height:348px;background:rgba(20,50,30,.5)"></div>
<div class="a" style="left:226px;top:93px;width:1px;height:348px;background:rgba(20,50,30,.5)"></div>
<div class="a" style="left:246px;top:93px;width:1px;height:348px;background:rgba(20,50,30,.5)"></div>
<div class="a" style="left:267px;top:93px;width:1px;height:348px;background:rgba(20,50,30,.5)"></div>
<div class="a" style="left:287px;top:93px;width:1px;height:348px;background:rgba(20,50,30,.5)"></div>
<div class="a" style="left:307px;top:93px;width:1px;height:348px;background:rgba(20,50,30,.5)"></div>
<div class="a" style="left:185px;top:93px;width:123px;height:1px;background:rgba(20,50,30,.5)"></div>
<div class="a" style="left:185px;top:110px;width:123px;height:1px;background:rgba(20,50,30,.5)"></div>
<div class="a" style="left:185px;top:128px;width:123px;height:1px;background:rgba(20,50,30,.5)"></div>
<div class="a" style="left:185px;top:145px;width:123px;height:1px;background:rgba(20,50,30,.5)"></div>
<div class="a" style="left:185px;top:162px;width:123px;height:1px;background:rgba(20,50,30,.5)"></div>
<div class="a" style="left:185px;top:180px;width:123px;height:1px;background:rgba(20,50,30,.5)"></div>
<div class="a" style="left:185px;top:197px;width:123px;height:1px;background:rgba(20,50,30,.5)"></div>
<div class="a" style="left:185px;top:214px;width:123px;height:1px;background:rgba(20,50,30,.5)"></div>
<div class="a" style="left:185px;top:232px;width:123px;height:1px;background:rgba(20,50,30,.5)"></div>
<div class="a" style="left:185px;top:249px;width:123px;height:1px;background:rgba(20,50,30,.5)"></div>
<div class="a" style="left:185px;top:267px;width:123px;height:1px;background:rgba(20,50,30,.5)"></div>
<div class="a" style="left:185px;top:284px;width:123px;height:1px;background:rgba(20,50,30,.5)"></div>
<div class="a" style="left:185px;top:301px;width:123px;height:1px;background:rgba(20,50,30,.5)"></div>
<div class="a" style="left:185px;top:319px;width:123px;height:1px;background:rgba(20,50,30,.5)"></div>
<div class="a" style="left:185px;top:336px;width:123px;height:1px;background:rgba(20,50,30,.5)"></div>
<div class="a" style="left:185px;top:353px;width:123px;height:1px;background:rgba(20,50,30,.5)"></div>
<div class="a" style="left:185px;top:371px;width:123px;height:1px;background:rgba(20,50,30,.5)"></div>
<div class="a" style="left:185px;top:388px;width:123px;height:1px;background:rgba(20,50,30,.5)"></div>
<div class="a" style="left:185px;top:405px;width:123px;height:1px;background:rgba(20,50,30,.5)"></div>
<div class="a" style="left:185px;top:423px;width:123px;height:1px;background:rgba(20,50,30,.5)"></div>
<div class="a" style="left:185px;top:440px;width:123px;height:1px;background:rgba(20,50,30,.5)"></div>
<div class="br" style="left:309.78px;top:95.00px;height:118.45px"></div>
<div class="br" style="left:309.78px;top:216.45px;height:118.45px"></div>
<div class="br" style="left:309.78px;top:337.90px;height:101.10px"></div>
<div class="c" style="left:316.30px;top:93.50px;background:#08f869"><i>118</i><s>327</s><b>64</b><u>27</u></div>
<div class="c" style="left:336.63px;top:93.50px;background:#08f85a"><i>119</i><s>330</s><b>65</b><u>46</u></div>
<div class="c" style="left:356.96px;top:93.50px;background:#08f83c"><i>120</i><s>320</s><b>67</b><u>46</u></div>
<div class="c" style="left:377.29px;top:93.50px;background:#08f810"><i>1</i><s>317</s><b>70</b><u>42</u></div>
<div class="c" style="left:397.62px;top:93.50px;background:#08f81e"><i>2</i><s>319</s><b>69</b><u>38</u></div>
<div class="c" style="left:417.95px;top:93.50px;background:#30f808"><i>3</i><s>322</s><b>72</b><u>40</u></div>
<div class="c" style="left:316.30px;top:110.85px;background:#08f84b"><i>117</i><s>322</s><b>66</b><u>54</u></div>
<div class="c" style="left:336.63px;top:110.85px;background:#08f869"><i>116</i><s>325</s><b>64</b><u>46</u></div>
<div class="c" style="left:356.96px;top:110.85px;background:#08f869"><i>115</i><s>327</s><b>64</b><u>38</u></div>
<div class="c" style="left:377.29px;top:110.85px;background:#08f810"><i>6</i><s>324</s><b>70</b><u>41</u></div>
<div class="c" style="left:397.62px;top:110.85px;background:#20f808"><i>5</i><s>326</s><b>71</b><u>35</u></div>
<div class="c" style="left:417.95px;top:110.85px;background:#08f81e"><i>4</i><s>322</s><b>69</b><u>47</u></div>
<div class="c" style="left:316.30px;top:128.20px;background:#08f83c"><i>112</i><s>330</s><b>67</b><u>48</u></div>
<div class="c" style="left:336.63px;top:128.20px;background:#08f85a"><i>113</i><s>327</s><b>65</b><u>55</u></div>
<div class="c" style="left:356.96px;top:128.20px;background:#08f869"><i>114</i><s>327</s><b>64</b><u>50</u></div>
<div class="c" style="left:377.29px;top:128.20px;background:#30f808"><i>7</i><s>328</s><b>72</b><u>48</u></div>
<div class="c" style="left:397.62px;top:128.20px;background:#08f81e"><i>8</i><s>321</s><b>69</b><u>21</u></div>
<div class="c" style="left:417.95px;top:128.20px;background:#90f808"><i>9</i><s>325</s><b>78</b><u>36</u></div>
<div class="c" style="left:316.30px;top:145.55px;background:#08f82d"><i>111</i><s>312</s><b>68</b><u>37</u></div>
<div class="c" style="left:336.63px;top:145.55px;background:#08f85a"><i>110</i><s>312</s><b>65</b><u>58</u></div>
<div class="c" style="left:356.96px;top:145.55px;background:#08f84b"><i>109</i><s>314</s><b>66</b><u>41</u></div>
<div class="c" style="left:377.29px;top:145.55px;background:#08f82d"><i>12</i><s>316</s><b>68</b><u>52</u></div>
<div class="c" style="left:397.62px;top:145.55px;background:#08f810"><i>11</i><s>318</s><b>70</b><u>51</u></div>
<div class="c" style="left:417.95px;top:145.55px;background:#f0f808"><i>10</i><s>308</s><b>84</b><u>18</u></div>
<div class="c" style="left:316.30px;top:162.90px;background:#08f81e"><i>106</i><s>322</s><b>69</b><u>43</u></div>
<div class="c" style="left:336.63px;top:162.90px;background:#08f84b"><i>107</i><s>326</s><b>66</b><u>47</u></div>
<div class="c" style="left:356.96px;top:162.90px;background:#08f85a"><i>108</i><s>323</s><b>65</b><u>53</u></div>
<div class="c" style="left:377.29px;top:162.90px;background:#08f81e"><i>13</i><s>321</s><b>69</b><u>44</u></div>
<div class="c" style="left:397.62px;top:162.90px;background:#30f808"><i>14</i><s>322</s><b>72</b><u>46</u></div>
<div class="c" style="left:417.95px;top:162.90px;background:#80f808"><i>15</i><s>327</s><b>77</b><u>35</u></div>
<div class="c" style="left:316.30px;top:180.25px;background:#08f82d"><i>105</i><s>314</s><b>68</b><u>52</u></div>
<div class="c" style="left:336.63px;top:180.25px;background:#08f85a"><i>104</i><s>317</s><b>65</b><u>49</u></div>
<div class="c" style="left:356.96px;top:180.25px;background:#08f82d"><i>103</i><s>316</s><b>68</b><u>44</u></div>
<div class="c" style="left:377.29px;top:180.25px;background:#20f808"><i>18</i><s>314</s><b>71</b><u>39</u></div>
<div class="c" style="left:397.62px;top:180.25px;background:#08f810"><i>17</i><s>318</s><b>70</b><u>40</u></div>
<div class="c" style="left:417.95px;top:180.25px;background:#fff808"><i>16</i><s>312</s><b>85</b><u>25</u></div>
<div class="c" style="left:316.30px;top:197.60px;background:#30f808"><i>100</i><s>331</s><b>72</b><u>34</u></div>
<div class="c" style="left:336.63px;top:197.60px;background:#08f82d"><i>101</i><s>327</s><b>68</b><u>39</u></div>
<div class="c" style="left:356.96px;top:197.60px;background:#08f82d"><i>102</i><s>325</s><b>68</b><u>38</u></div>
<div class="c" style="left:377.29px;top:197.60px;background:#08f81e"><i>19</i><s>313</s><b>69</b><u>35</u></div>
<div class="c" style="left:397.62px;top:197.60px;background:#30f808"><i>20</i><s>314</s><b>72</b><u>54</u></div>
<div class="c" style="left:417.95px;top:197.60px;background:#e0f808"><i>21</i><s>315</s><b>83</b><u>22</u></div>
<div class="c" style="left:316.30px;top:214.95px;background:#08f82d"><i>99</i><s>326</s><b>68</b><u>36</u></div>
<div class="c" style="left:336.63px;top:214.95px;background:#08f869"><i>98</i><s>322</s><b>64</b><u>50</u></div>
<div class="c" style="left:356.96px;top:214.95px;background:#08f84b"><i>97</i><s>325</s><b>66</b><u>50</u></div>
<div class="c" style="left:377.29px;top:214.95px;background:#20f808"><i>24</i><s>314</s><b>71</b><u>42</u></div>
<div class="c" style="left:397.62px;top:214.95px;background:#08f81e"><i>23</i><s>312</s><b>69</b><u>53</u></div>
<div class="c" style="left:417.95px;top:214.95px;background:#ffe808"><i>22</i><s>312</s><b>86</b><u>38</u></div>
<div class="c" style="left:316.30px;top:232.30px;background:#08f84b"><i>94</i><s>324</s><b>66</b><u>57</u></div>
<div class="c" style="left:336.63px;top:232.30px;background:#08f878"><i>95</i><s>327</s><b>63</b><u>44</u></div>
<div class="c" style="left:356.96px;top:232.30px;background:#08f85a"><i>96</i><s>324</s><b>65</b><u>43</u></div>
<div class="c" style="left:377.29px;top:232.30px;background:#08f81e"><i>25</i><s>315</s><b>69</b><u>44</u></div>
<div class="c" style="left:397.62px;top:232.30px;background:#08f81e"><i>26</i><s>315</s><b>69</b><u>32</u></div>
<div class="c" style="left:417.95px;top:232.30px;background:#80f808"><i>27</i><s>315</s><b>77</b><u>39</u></div>
<div class="c" style="left:316.30px;top:249.65px;background:#08f81e"><i>93</i><s>322</s><b>69</b><u>45</u></div>
<div class="c" style="left:336.63px;top:249.65px;background:#08f896"><i>92</i><s>325</s><b>61</b><u>32</u></div>
<div class="c" style="left:356.96px;top:249.65px;background:#08f869"><i>91</i><s>323</s><b>64</b><u>39</u></div>
<div class="c" style="left:377.29px;top:249.65px;background:#08f810"><i>30</i><s>318</s><b>70</b><u>54</u></div>
<div class="c" style="left:397.62px;top:249.65px;background:#08f81e"><i>29</i><s>323</s><b>69</b><u>56</u></div>
<div class="c" style="left:417.95px;top:249.65px;background:#c0f808"><i>28</i><s>319</s><b>81</b><u>35</u></div>
<div class="c" style="left:316.30px;top:267.00px;background:#08f810"><i>88</i><s>325</s><b>70</b><u>50</u></div>
<div class="c" style="left:336.63px;top:267.00px;background:#08f896"><i>89</i><s>327</s><b>61</b><u>49</u></div>
<div class="c" style="left:356.96px;top:267.00px;background:#08f869"><i>90</i><s>322</s><b>64</b><u>55</u></div>
<div class="c" style="left:377.29px;top:267.00px;background:#08f85a"><i>31</i><s>318</s><b>65</b><u>54</u></div>
<div class="c" style="left:397.62px;top:267.00px;background:#08f81e"><i>32</i><s>319</s><b>69</b><u>42</u></div>
<div class="c" style="left:417.95px;top:267.00px;background:#e0f808"><i>33</i><s>311</s><b>83</b><u>44</u></div>
<div class="c" style="left:316.30px;top:284.35px;background:#08f85a"><i>87</i><s>326</s><b>65</b><u>51</u></div>
<div class="c" style="left:336.63px;top:284.35px;background:#08f878"><i>86</i><s>331</s><b>63</b><u>33</u></div>
<div class="c" style="left:356.96px;top:284.35px;background:#08f896"><i>85</i><s>328</s><b>61</b><u>42</u></div>
<div class="c" style="left:377.29px;top:284.35px;background:#08f82d"><i>36</i><s>323</s><b>68</b><u>33</u></div>
<div class="c" style="left:397.62px;top:284.35px;background:#20f808"><i>35</i><s>329</s><b>71</b><u>48</u></div>
<div class="c" style="left:417.95px;top:284.35px;background:#b0f808"><i>34</i><s>328</s><b>80</b><u>28</u></div>
<div class="c" style="left:316.30px;top:301.70px;background:#08f896"><i>82</i><s>325</s><b>61</b><u>37</u></div>
<div class="c" style="left:336.63px;top:301.70px;background:#08f869"><i>83</i><s>325</s><b>64</b><u>44</u></div>
<div class="c" style="left:356.96px;top:301.70px;background:#08f869"><i>84</i><s>322</s><b>64</b><u>57</u></div>
<div class="c" style="left:377.29px;top:301.70px;background:#08f869"><i>37</i><s>320</s><b>64</b><u>47</u></div>
<div class="c" style="left:397.62px;top:301.70px;background:#08f81e"><i>38</i><s>317</s><b>69</b><u>56</u></div>
<div class="c" style="left:417.95px;top:301.70px;background:#90f808"><i>39</i><s>322</s><b>78</b><u>39</u></div>
<div class="c" style="left:316.30px;top:319.05px;background:#08f896"><i>81</i><s>323</s><b>61</b><u>36</u></div>
<div class="c" style="left:336.63px;top:319.05px;background:#08f887"><i>80</i><s>321</s><b>62</b><u>49</u></div>
<div class="c" style="left:356.96px;top:319.05px;background:#08f869"><i>79</i><s>318</s><b>64</b><u>51</u></div>
<div class="c" style="left:377.29px;top:319.05px;background:#08f81e"><i>42</i><s>318</s><b>69</b><u>46</u></div>
<div class="c" style="left:397.62px;top:319.05px;background:#08f81e"><i>41</i><s>319</s><b>69</b><u>47</u></div>
<div class="c" style="left:417.95px;top:319.05px;background:#70f808"><i>40</i><s>314</s><b>76</b><u>41</u></div>
<div class="c" style="left:316.30px;top:336.40px;background:#08f878"><i>76</i><s>325</s><b>63</b><u>58</u></div>
<div class="c" style="left:336.63px;top:336.40px;background:#08f869"><i>77</i><s>325</s><b>64</b><u>50</u></div>
<div class="c" style="left:356.96px;top:336.40px;background:#08f85a"><i>78</i><s>326</s><b>65</b><u>51</u></div>
<div class="c" style="left:377.29px;top:336.40px;background:#08f83c"><i>43</i><s>337</s><b>67</b><u>45</u></div>
<div class="c" style="left:397.62px;top:336.40px;background:#08f81e"><i>44</i><s>319</s><b>69</b><u>41</u></div>
<div class="c" style="left:417.95px;top:336.40px;background:#d0f808"><i>45</i><s>312</s><b>82</b><u>39</u></div>
<div class="c" style="left:316.30px;top:353.75px;background:#08f869"><i>75</i><s>317</s><b>64</b><u>45</u></div>
<div class="c" style="left:336.63px;top:353.75px;background:#08f869"><i>74</i><s>321</s><b>64</b><u>46</u></div>
<div class="c" style="left:356.96px;top:353.75px;background:#08f85a"><i>73</i><s>322</s><b>65</b><u>39</u></div>
<div class="c" style="left:377.29px;top:353.75px;background:#08f81e"><i>48</i><s>331</s><b>69</b><u>48</u></div>
<div class="c" style="left:397.62px;top:353.75px;background:#08f810"><i>47</i><s>326</s><b>70</b><u>44</u></div>
<div class="c" style="left:417.95px;top:353.75px;background:#50f808"><i>46</i><s>331</s><b>74</b><u>40</u></div>
<div class="c" style="left:316.30px;top:371.10px;background:#08f869"><i>70</i><s>321</s><b>64</b><u>57</u></div>
<div class="c" style="left:336.63px;top:371.10px;background:#08f869"><i>71</i><s>322</s><b>64</b><u>56</u></div>
<div class="c" style="left:356.96px;top:371.10px;background:#08f878"><i>72</i><s>325</s><b>63</b><u>41</u></div>
<div class="c" style="left:377.29px;top:371.10px;background:#08f84b"><i>49</i><s>321</s><b>66</b><u>35</u></div>
<div class="c" style="left:397.62px;top:371.10px;background:#08f82d"><i>50</i><s>324</s><b>68</b><u>43</u></div>
<div class="c" style="left:417.95px;top:371.10px;background:#50f808"><i>51</i><s>323</s><b>74</b><u>35</u></div>
<div class="c" style="left:316.30px;top:388.45px;background:#08f887"><i>69</i><s>319</s><b>62</b><u>53</u></div>
<div class="c" style="left:336.63px;top:388.45px;background:#08f869"><i>68</i><s>318</s><b>64</b><u>43</u></div>
<div class="c" style="left:356.96px;top:388.45px;background:#08f869"><i>67</i><s>317</s><b>64</b><u>49</u></div>
<div class="c" style="left:377.29px;top:388.45px;background:#08f869"><i>54</i><s>321</s><b>64</b><u>46</u></div>
<div class="c" style="left:397.62px;top:388.45px;background:#08f83c"><i>53</i><s>321</s><b>67</b><u>46</u></div>
<div class="c" style="left:417.95px;top:388.45px;background:#30f808"><i>52</i><s>321</s><b>72</b><u>42</u></div>
<div class="c" style="left:316.30px;top:405.80px;background:#08f8b4"><i>64</i><s>329</s><b>59</b><u>42</u></div>
<div class="c" style="left:336.63px;top:405.80px;background:#08f878"><i>65</i><s>330</s><b>63</b><u>47</u></div>
<div class="c" style="left:356.96px;top:405.80px;background:#08f896"><i>66</i><s>333</s><b>61</b><u>31</u></div>
<div class="c" style="left:377.29px;top:405.80px;background:#08f896"><i>55</i><s>329</s><b>61</b><u>45</u></div>
<div class="c" style="left:397.62px;top:405.80px;background:#08f878"><i>56</i><s>327</s><b>63</b><u>40</u></div>
<div class="c" style="left:417.95px;top:405.80px;background:#08f81e"><i>57</i><s>323</s><b>69</b><u>40</u></div>
<div class="c" style="left:316.30px;top:423.15px;background:#08f8d2"><i>63</i><s>326</s><b>57</b><u>48</u></div>
<div class="c" style="left:336.63px;top:423.15px;background:#08f8c3"><i>62</i><s>328</s><b>58</b><u>42</u></div>
<div class="c" style="left:356.96px;top:423.15px;background:#08f8e1"><i>61</i><s>332</s><b>56</b><u>45</u></div>
<div class="c" style="left:377.29px;top:423.15px;background:#08f896"><i>60</i><s>326</s><b>61</b><u>48</u></div>
<div class="c" style="left:397.62px;top:423.15px;background:#08f887"><i>59</i><s>323</s><b>62</b><u>41</u></div>
<div class="c" style="left:417.95px;top:423.15px;background:#08f84b"><i>58</i><s>322</s><b>66</b><u>43</u></div>
<div class="a" style="left:316px;top:93px;width:1px;height:348px;background:rgba(20,50,30,.5)"></div>
<div class="a" style="left:336px;top:93px;width:1px;height:348px;background:rgba(20,50,30,.5)"></div>
<div class="a" style="left:356px;top:93px;width:1px;height:348px;background:rgba(20,50,30,.5)"></div>
<div class="a" style="left:377px;top:93px;width:1px;height:348px;background:rgba(20,50,30,.5)"></div>
<div class="a" style="left:397px;top:93px;width:1px;height:348px;background:rgba(20,50,30,.5)"></div>
<div class="a" style="left:417px;top:93px;width:1px;height:348px;background:rgba(20,50,30,.5)"></div>
<div class="a" style="left:438px;top:93px;width:1px;height:348px;background:rgba(20,50,30,.5)"></div>
<div class="a" style="left:316px;top:93px;width:123px;height:1px;background:rgba(20,50,30,.5)"></div>
<div class="a" style="left:316px;top:110px;width:123px;height:1px;background:rgba(20,50,30,.5)"></div>
<div class="a" style="left:316px;top:128px;width:123px;height:1px;background:rgba(20,50,30,.5)"></div>
<div class="a" style="left:316px;top:145px;width:123px;height:1px;background:rgba(20,50,30,.5)"></div>
<div class="a" style="left:316px;top:162px;width:123px;height:1px;background:rgba(20,50,30,.5)"></div>
<div class="a" style="left:316px;top:180px;width:123px;height:1px;background:rgba(20,50,30,.5)"></div>
<div class="a" style="left:316px;top:197px;width:123px;height:1px;background:rgba(20,50,30,.5)"></div>
<div class="a" style="left:316px;top:214px;width:123px;height:1px;background:rgba(20,50,30,.5)"></div>
<div class="a" style="left:316px;top:232px;width:123px;height:1px;background:rgba(20,50,30,.5)"></div>
<div class="a" style="left:316px;top:249px;width:123px;height:1px;background:rgba(20,50,30,.5)"></div>
<div class="a" style="left:316px;top:267px;width:123px;height:1px;background:rgba(20,50,30,.5)"></div>
<div class="a" style="left:316px;top:284px;width:123px;height:1px;background:rgba(20,50,30,.5)"></div>
<div class="a" style="left:316px;top:301px;width:123px;height:1px;background:rgba(20,50,30,.5)"></div>
<div class="a" style="left:316px;top:319px;width:123px;height:1px;background:rgba(20,50,30,.5)"></div>
<div class="a" style="left:316px;top:336px;width:123px;height:1px;background:rgba(20,50,30,.5)"></div>
<div class="a" style="left:316px;top:353px;width:123px;height:1px;background:rgba(20,50,30,.5)"></div>
<div class="a" style="left:316px;top:371px;width:123px;height:1px;background:rgba(20,50,30,.5)"></div>
<div class="a" style="left:316px;top:388px;width:123px;height:1px;background:rgba(20,50,30,.5)"></div>
<div class="a" style="left:316px;top:405px;width:123px;height:1px;background:rgba(20,50,30,.5)"></div>
<div class="a" style="left:316px;top:423px;width:123px;height:1px;background:rgba(20,50,30,.5)"></div>
<div class="a" style="left:316px;top:440px;width:123px;height:1px;background:rgba(20,50,30,.5)"></div>
<div class="br" style="left:440.28px;top:95.00px;height:118.45px"></div>
<div class="br" style="left:440.28px;top:216.45px;height:118.45px"></div>
<div class="br" style="left:440.28px;top:337.90px;height:101.10px"></div>
<div class="c" style="left:446.90px;top:93.50px;background:#10dcf8"><i>118</i><s>326</s><b>53</b><u>46</u></div>
<div class="c" style="left:467.23px;top:93.50px;background:#08f896"><i>119</i><s>326</s><b>61</b><u>48</u></div>
<div class="c" style="left:487.56px;top:93.50px;background:#08f869"><i>120</i><s>330</s><b>64</b><u>58</u></div>
<div class="c" style="left:507.89px;top:93.50px;background:#08f84b"><i>1</i><s>330</s><b>66</b><u>49</u></div>
<div class="c" style="left:528.22px;top:93.50px;background:#08f83c"><i>2</i><s>321</s><b>67</b><u>42</u></div>
<div class="c" style="left:548.55px;top:93.50px;background:#08f82d"><i>3</i><s>323</s><b>68</b><u>28</u></div>
<div class="c" style="left:446.90px;top:110.85px;background:#10f8f8"><i>117</i><s>316</s><b>55</b><u>48</u></div>
<div class="c" style="left:467.23px;top:110.85px;background:#08f8a5"><i>116</i><s>322</s><b>60</b><u>41</u></div>
<div class="c" style="left:487.56px;top:110.85px;background:#08f85a"><i>115</i><s>321</s><b>65</b><u>55</u></div>
<div class="c" style="left:507.89px;top:110.85px;background:#08f83c"><i>6</i><s>321</s><b>67</b><u>39</u></div>
<div class="c" style="left:528.22px;top:110.85px;background:#08f81e"><i>5</i><s>326</s><b>69</b><u>58</u></div>
<div class="c" style="left:548.55px;top:110.85px;background:#08f83c"><i>4</i><s>327</s><b>67</b><u>46</u></div>
<div class="c" style="left:446.90px;top:128.20px;background:#08f8e1"><i>112</i><s>321</s><b>56</b><u>51</u></div>
<div class="c" style="left:467.23px;top:128.20px;background:#08f8a5"><i>113</i><s>318</s><b>60</b><u>54</u></div>
<div class="c" style="left:487.56px;top:128.20px;background:#08f896"><i>114</i><s>317</s><b>61</b><u>44</u></div>
<div class="c" style="left:507.89px;top:128.20px;background:#08f878"><i>7</i><s>319</s><b>63</b><u>48</u></div>
<div class="c" style="left:528.22px;top:128.20px;background:#30f808"><i>8</i><s>320</s><b>72</b><u>21</u></div>
<div class="c" style="left:548.55px;top:128.20px;background:#08f81e"><i>9</i><s>315</s><b>69</b><u>50</u></div>
<div class="c" style="left:446.90px;top:145.55px;background:#08f8d2"><i>111</i><s>326</s><b>57</b><u>46</u></div>
<div class="c" style="left:467.23px;top:145.55px;background:#08f8c3"><i>110</i><s>326</s><b>58</b><u>42</u></div>
<div class="c" style="left:487.56px;top:145.55px;background:#08f887"><i>109</i><s>317</s><b>62</b><u>36</u></div>
<div class="c" style="left:507.89px;top:145.55px;background:#08f82d"><i>12</i><s>322</s><b>68</b><u>54</u></div>
<div class="c" style="left:528.22px;top:145.55px;background:#08f82d"><i>11</i><s>321</s><b>68</b><u>46</u></div>
<div class="c" style="left:548.55px;top:145.55px;background:#20f808"><i>10</i><s>321</s><b>71</b><u>47</u></div>
<div class="c" style="left:446.90px;top:162.90px;background:#08f8e1"><i>106</i><s>322</s><b>56</b><u>40</u></div>
<div class="c" style="left:467.23px;top:162.90px;background:#08f8a5"><i>107</i><s>323</s><b>60</b><u>46</u></div>
<div class="c" style="left:487.56px;top:162.90px;background:#08f887"><i>108</i><s>325</s><b>62</b><u>56</u></div>
<div class="c" style="left:507.89px;top:162.90px;background:#08f83c"><i>13</i><s>320</s><b>67</b><u>42</u></div>
<div class="c" style="left:528.22px;top:162.90px;background:#08f810"><i>14</i><s>318</s><b>70</b><u>54</u></div>
<div class="c" style="left:548.55px;top:162.90px;background:#80f808"><i>15</i><s>320</s><b>77</b><u>46</u></div>
<div class="c" style="left:446.90px;top:180.25px;background:#08f8d2"><i>105</i><s>322</s><b>57</b><u>38</u></div>
<div class="c" style="left:467.23px;top:180.25px;background:#08f8a5"><i>104</i><s>317</s><b>60</b><u>38</u></div>
<div class="c" style="left:487.56px;top:180.25px;background:#08f8a5"><i>103</i><s>317</s><b>60</b><u>38</u></div>
<div class="c" style="left:507.89px;top:180.25px;background:#08f83c"><i>18</i><s>312</s><b>67</b><u>36</u></div>
<div class="c" style="left:528.22px;top:180.25px;background:#08f810"><i>17</i><s>315</s><b>70</b><u>25</u></div>
<div class="c" style="left:548.55px;top:180.25px;background:#f0f808"><i>16</i><s>312</s><b>84</b><u>28</u></div>
<div class="c" style="left:446.90px;top:197.60px;background:#08f8b4"><i>100</i><s>321</s><b>59</b><u>37</u></div>
<div class="c" style="left:467.23px;top:197.60px;background:#08f887"><i>101</i><s>326</s><b>62</b><u>53</u></div>
<div class="c" style="left:487.56px;top:197.60px;background:#08f84b"><i>102</i><s>325</s><b>66</b><u>45</u></div>
<div class="c" style="left:507.89px;top:197.60px;background:#08f85a"><i>19</i><s>321</s><b>65</b><u>43</u></div>
<div class="c" style="left:528.22px;top:197.60px;background:#08f81e"><i>20</i><s>316</s><b>69</b><u>54</u></div>
<div class="c" style="left:548.55px;top:197.60px;background:#50f808"><i>21</i><s>318</s><b>74</b><u>27</u></div>
<div class="c" style="left:446.90px;top:214.95px;background:#08f8b4"><i>99</i><s>318</s><b>59</b><u>40</u></div>
<div class="c" style="left:467.23px;top:214.95px;background:#08f896"><i>98</i><s>318</s><b>61</b><u>47</u></div>
<div class="c" style="left:487.56px;top:214.95px;background:#08f878"><i>97</i><s>315</s><b>63</b><u>31</u></div>
<div class="c" style="left:507.89px;top:214.95px;background:#08f83c"><i>24</i><s>325</s><b>67</b><u>38</u></div>
<div class="c" style="left:528.22px;top:214.95px;background:#08f810"><i>23</i><s>327</s><b>70</b><u>44</u></div>
<div class="c" style="left:548.55px;top:214.95px;background:#30f808"><i>22</i><s>322</s><b>72</b><u>45</u></div>
<div class="c" style="left:446.90px;top:232.30px;background:#08f8c3"><i>94</i><s>325</s><b>58</b><u>46</u></div>
<div class="c" style="left:467.23px;top:232.30px;background:#08f887"><i>95</i><s>326</s><b>62</b><u>51</u></div>
<div class="c" style="left:487.56px;top:232.30px;background:#08f869"><i>96</i><s>312</s><b>64</b><u>51</u></div>
<div class="c" style="left:507.89px;top:232.30px;background:#08f85a"><i>25</i><s>308</s><b>65</b><u>53</u></div>
<div class="c" style="left:528.22px;top:232.30px;background:#08f81e"><i>26</i><s>307</s><b>69</b><u>29</u></div>
<div class="c" style="left:548.55px;top:232.30px;background:#20f808"><i>27</i><s>308</s><b>71</b><u>50</u></div>
<div class="c" style="left:446.90px;top:249.65px;background:#08f8c3"><i>93</i><s>322</s><b>58</b><u>54</u></div>
<div class="c" style="left:467.23px;top:249.65px;background:#08f8a5"><i>92</i><s>316</s><b>60</b><u>40</u></div>
<div class="c" style="left:487.56px;top:249.65px;background:#08f887"><i>91</i><s>321</s><b>62</b><u>57</u></div>
<div class="c" style="left:507.89px;top:249.65px;background:#08f869"><i>30</i><s>314</s><b>64</b><u>38</u></div>
<div class="c" style="left:528.22px;top:249.65px;background:#08f83c"><i>29</i><s>313</s><b>67</b><u>37</u></div>
<div class="c" style="left:548.55px;top:249.65px;background:#40f808"><i>28</i><s>315</s><b>73</b><u>40</u></div>
<div class="c" style="left:446.90px;top:267.00px;background:#08f8e1"><i>88</i><s>318</s><b>56</b><u>46</u></div>
<div class="c" style="left:467.23px;top:267.00px;background:#08f8c3"><i>89</i><s>319</s><b>58</b><u>45</u></div>
<div class="c" style="left:487.56px;top:267.00px;background:#08f887"><i>90</i><s>322</s><b>62</b><u>41</u></div>
<div class="c" style="left:507.89px;top:267.00px;background:#08f878"><i>31</i><s>318</s><b>63</b><u>38</u></div>
<div class="c" style="left:528.22px;top:267.00px;background:#08f82d"><i>32</i><s>320</s><b>68</b><u>38</u></div>
<div class="c" style="left:548.55px;top:267.00px;background:#30f808"><i>33</i><s>318</s><b>72</b><u>46</u></div>
<div class="c" style="left:446.90px;top:284.35px;background:#08f8d2"><i>87</i><s>324</s><b>57</b><u>58</u></div>
<div class="c" style="left:467.23px;top:284.35px;background:#08f8b4"><i>86</i><s>331</s><b>59</b><u>45</u></div>
<div class="c" style="left:487.56px;top:284.35px;background:#08f896"><i>85</i><s>311</s><b>61</b><u>51</u></div>
<div class="c" style="left:507.89px;top:284.35px;background:#08f878"><i>36</i><s>311</s><b>63</b><u>46</u></div>
<div class="c" style="left:528.22px;top:284.35px;background:#08f83c"><i>35</i><s>316</s><b>67</b><u>38</u></div>
<div class="c" style="left:548.55px;top:284.35px;background:#08f810"><i>34</i><s>313</s><b>70</b><u>48</u></div>
<div class="c" style="left:446.90px;top:301.70px;background:#08f8d2"><i>82</i><s>327</s><b>57</b><u>58</u></div>
<div class="c" style="left:467.23px;top:301.70px;background:#08f8c3"><i>83</i><s>331</s><b>58</b><u>48</u></div>
<div class="c" style="left:487.56px;top:301.70px;background:#08f8a5"><i>84</i><s>335</s><b>60</b><u>43</u></div>
<div class="c" style="left:507.89px;top:301.70px;background:#08f878"><i>37</i><s>313</s><b>63</b><u>45</u></div>
<div class="c" style="left:528.22px;top:301.70px;background:#08f84b"><i>38</i><s>312</s><b>66</b><u>45</u></div>
<div class="c" style="left:548.55px;top:301.70px;background:#08f81e"><i>39</i><s>306</s><b>69</b><u>41</u></div>
<div class="c" style="left:446.90px;top:319.05px;background:#08f8c3"><i>81</i><s>340</s><b>58</b><u>51</u></div>
<div class="c" style="left:467.23px;top:319.05px;background:#08f896"><i>80</i><s>339</s><b>61</b><u>38</u></div>
<div class="c" style="left:487.56px;top:319.05px;background:#08f896"><i>79</i><s>338</s><b>61</b><u>46</u></div>
<div class="c" style="left:507.89px;top:319.05px;background:#08f869"><i>42</i><s>316</s><b>64</b><u>35</u></div>
<div class="c" style="left:528.22px;top:319.05px;background:#08f82d"><i>41</i><s>321</s><b>68</b><u>38</u></div>
<div class="c" style="left:548.55px;top:319.05px;background:#08f82d"><i>40</i><s>318</s><b>68</b><u>32</u></div>
<div class="c" style="left:446.90px;top:336.40px;background:#08f896"><i>76</i><s>333</s><b>61</b><u>41</u></div>
<div class="c" style="left:467.23px;top:336.40px;background:#08f8e1"><i>77</i><s>337</s><b>56</b><u>50</u></div>
<div class="c" style="left:487.56px;top:336.40px;background:#08f8a5"><i>78</i><s>333</s><b>60</b><u>38</u></div>
<div class="c" style="left:507.89px;top:336.40px;background:#08f8a5"><i>43</i><s>318</s><b>60</b><u>42</u></div>
<div class="c" style="left:528.22px;top:336.40px;background:#08f878"><i>44</i><s>320</s><b>63</b><u>45</u></div>
<div class="c" style="left:548.55px;top:336.40px;background:#30f808"><i>45</i><s>318</s><b>72</b><u>51</u></div>
<div class="c" style="left:446.90px;top:353.75px;background:#08f8d2"><i>75</i><s>330</s><b>57</b><u>32</u></div>
<div class="c" style="left:467.23px;top:353.75px;background:#08f8c3"><i>74</i><s>337</s><b>58</b><u>27</u></div>
<div class="c" style="left:487.56px;top:353.75px;background:#08f8a5"><i>73</i><s>337</s><b>60</b><u>42</u></div>
<div class="c" style="left:507.89px;top:353.75px;background:#08f8a5"><i>48</i><s>329</s><b>60</b><u>37</u></div>
<div class="c" style="left:528.22px;top:353.75px;background:#08f869"><i>47</i><s>328</s><b>64</b><u>38</u></div>
<div class="c" style="left:548.55px;top:353.75px;background:#08f82d"><i>46</i><s>333</s><b>68</b><u>46</u></div>
<div class="c" style="left:446.90px;top:371.10px;background:#08f8c3"><i>70</i><s>326</s><b>58</b><u>54</u></div>
<div class="c" style="left:467.23px;top:371.10px;background:#08f8e1"><i>71</i><s>338</s><b>56</b><u>38</u></div>
<div class="c" style="left:487.56px;top:371.10px;background:#08f8a5"><i>72</i><s>332</s><b>60</b><u>51</u></div>
<div class="c" style="left:507.89px;top:371.10px;background:#08f8b4"><i>49</i><s>316</s><b>59</b><u>42</u></div>
<div class="c" style="left:528.22px;top:371.10px;background:#08f887"><i>50</i><s>313</s><b>62</b><u>48</u></div>
<div class="c" style="left:548.55px;top:371.10px;background:#08f83c"><i>51</i><s>314</s><b>67</b><u>36</u></div>
<div class="c" style="left:446.90px;top:388.45px;background:#08f8e1"><i>69</i><s>338</s><b>56</b><u>49</u></div>
<div class="c" style="left:467.23px;top:388.45px;background:#08f8d2"><i>68</i><s>339</s><b>57</b><u>44</u></div>
<div class="c" style="left:487.56px;top:388.45px;background:#08f8c3"><i>67</i><s>341</s><b>58</b><u>55</u></div>
<div class="c" style="left:507.89px;top:388.45px;background:#08f896"><i>54</i><s>325</s><b>61</b><u>52</u></div>
<div class="c" style="left:528.22px;top:388.45px;background:#08f869"><i>53</i><s>325</s><b>64</b><u>45</u></div>
<div class="c" style="left:548.55px;top:388.45px;background:#08f85a"><i>52</i><s>318</s><b>65</b><u>46</u></div>
<div class="c" style="left:446.90px;top:405.80px;background:#10eaf8"><i>64</i><s>323</s><b>54</b><u>40</u></div>
<div class="c" style="left:467.23px;top:405.80px;background:#10eaf8"><i>65</i><s>325</s><b>54</b><u>36</u></div>
<div class="c" style="left:487.56px;top:405.80px;background:#10eaf8"><i>66</i><s>323</s><b>54</b><u>40</u></div>
<div class="c" style="left:507.89px;top:405.80px;background:#08f8b4"><i>55</i><s>329</s><b>59</b><u>42</u></div>
<div class="c" style="left:528.22px;top:405.80px;background:#08f8c3"><i>56</i><s>325</s><b>58</b><u>37</u></div>
<div class="c" style="left:548.55px;top:405.80px;background:#08f878"><i>57</i><s>322</s><b>63</b><u>44</u></div>
<div class="c" style="left:446.90px;top:423.15px;background:#10dcf8"><i>63</i><s>323</s><b>53</b><u>48</u></div>
<div class="c" style="left:467.23px;top:423.15px;background:#10eaf8"><i>62</i><s>327</s><b>54</b><u>40</u></div>
<div class="c" style="left:487.56px;top:423.15px;background:#10eaf8"><i>61</i><s>328</s><b>54</b><u>43</u></div>
<div class="c" style="left:507.89px;top:423.15px;background:#08f8d2"><i>60</i><s>328</s><b>57</b><u>49</u></div>
<div class="c" style="left:528.22px;top:423.15px;background:#08f8d2"><i>59</i><s>321</s><b>57</b><u>52</u></div>
<div class="c" style="left:548.55px;top:423.15px;background:#08f8a5"><i>58</i><s>318</s><b>60</b><u>38</u></div>
<div class="a" style="left:446px;top:93px;width:1px;height:348px;background:rgba(20,50,30,.5)"></div>
<div class="a" style="left:467px;top:93px;width:1px;height:348px;background:rgba(20,50,30,.5)"></div>
<div class="a" style="left:487px;top:93px;width:1px;height:348px;background:rgba(20,50,30,.5)"></div>
<div class="a" style="left:507px;top:93px;width:1px;height:348px;background:rgba(20,50,30,.5)"></div>
<div class="a" style="left:528px;top:93px;width:1px;height:348px;background:rgba(20,50,30,.5)"></div>
<div class="a" style="left:548px;top:93px;width:1px;height:348px;background:rgba(20,50,30,.5)"></div>
<div class="a" style="left:568px;top:93px;width:1px;height:348px;background:rgba(20,50,30,.5)"></div>
<div class="a" style="left:446px;top:93px;width:123px;height:1px;background:rgba(20,50,30,.5)"></div>
<div class="a" style="left:446px;top:110px;width:123px;height:1px;background:rgba(20,50,30,.5)"></div>
<div class="a" style="left:446px;top:128px;width:123px;height:1px;background:rgba(20,50,30,.5)"></div>
<div class="a" style="left:446px;top:145px;width:123px;height:1px;background:rgba(20,50,30,.5)"></div>
<div class="a" style="left:446px;top:162px;width:123px;height:1px;background:rgba(20,50,30,.5)"></div>
<div class="a" style="left:446px;top:180px;width:123px;height:1px;background:rgba(20,50,30,.5)"></div>
<div class="a" style="left:446px;top:197px;width:123px;height:1px;background:rgba(20,50,30,.5)"></div>
<div class="a" style="left:446px;top:214px;width:123px;height:1px;background:rgba(20,50,30,.5)"></div>
<div class="a" style="left:446px;top:232px;width:123px;height:1px;background:rgba(20,50,30,.5)"></div>
<div class="a" style="left:446px;top:249px;width:123px;height:1px;background:rgba(20,50,30,.5)"></div>
<div class="a" style="left:446px;top:267px;width:123px;height:1px;background:rgba(20,50,30,.5)"></div>
<div class="a" style="left:446px;top:284px;width:123px;height:1px;background:rgba(20,50,30,.5)"></div>
<div class="a" style="left:446px;top:301px;width:123px;height:1px;background:rgba(20,50,30,.5)"></div>
<div class="a" style="left:446px;top:319px;width:123px;height:1px;background:rgba(20,50,30,.5)"></div>
<div class="a" style="left:446px;top:336px;width:123px;height:1px;background:rgba(20,50,30,.5)"></div>
<div class="a" style="left:446px;top:353px;width:123px;height:1px;background:rgba(20,50,30,.5)"></div>
<div class="a" style="left:446px;top:371px;width:123px;height:1px;background:rgba(20,50,30,.5)"></div>
<div class="a" style="left:446px;top:388px;width:123px;height:1px;background:rgba(20,50,30,.5)"></div>
<div class="a" style="left:446px;top:405px;width:123px;height:1px;background:rgba(20,50,30,.5)"></div>
<div class="a" style="left:446px;top:423px;width:123px;height:1px;background:rgba(20,50,30,.5)"></div>
<div class="a" style="left:446px;top:440px;width:123px;height:1px;background:rgba(20,50,30,.5)"></div>
<div class="br" style="left:570.88px;top:95.00px;height:118.45px"></div>
<div class="br" style="left:570.88px;top:216.45px;height:118.45px"></div>
<div class="br" style="left:570.88px;top:337.90px;height:101.10px"></div>
<svg class="a" style="left:179.6px;top:258.9px" width="4.8" height="17" viewBox="0 0 4.8 17"><path d="M0 0 L4.8 8.5 L0 17Z" fill="#6ad82c"/></svg>
<svg class="a" style="left:574.9px;top:259.4px" width="4.1" height="16.2" viewBox="0 0 4.1 16.2"><path d="M0 0 L4.1 8.1 L0 16.2Z" fill="#d01c1c"/></svg>
</body></html>
